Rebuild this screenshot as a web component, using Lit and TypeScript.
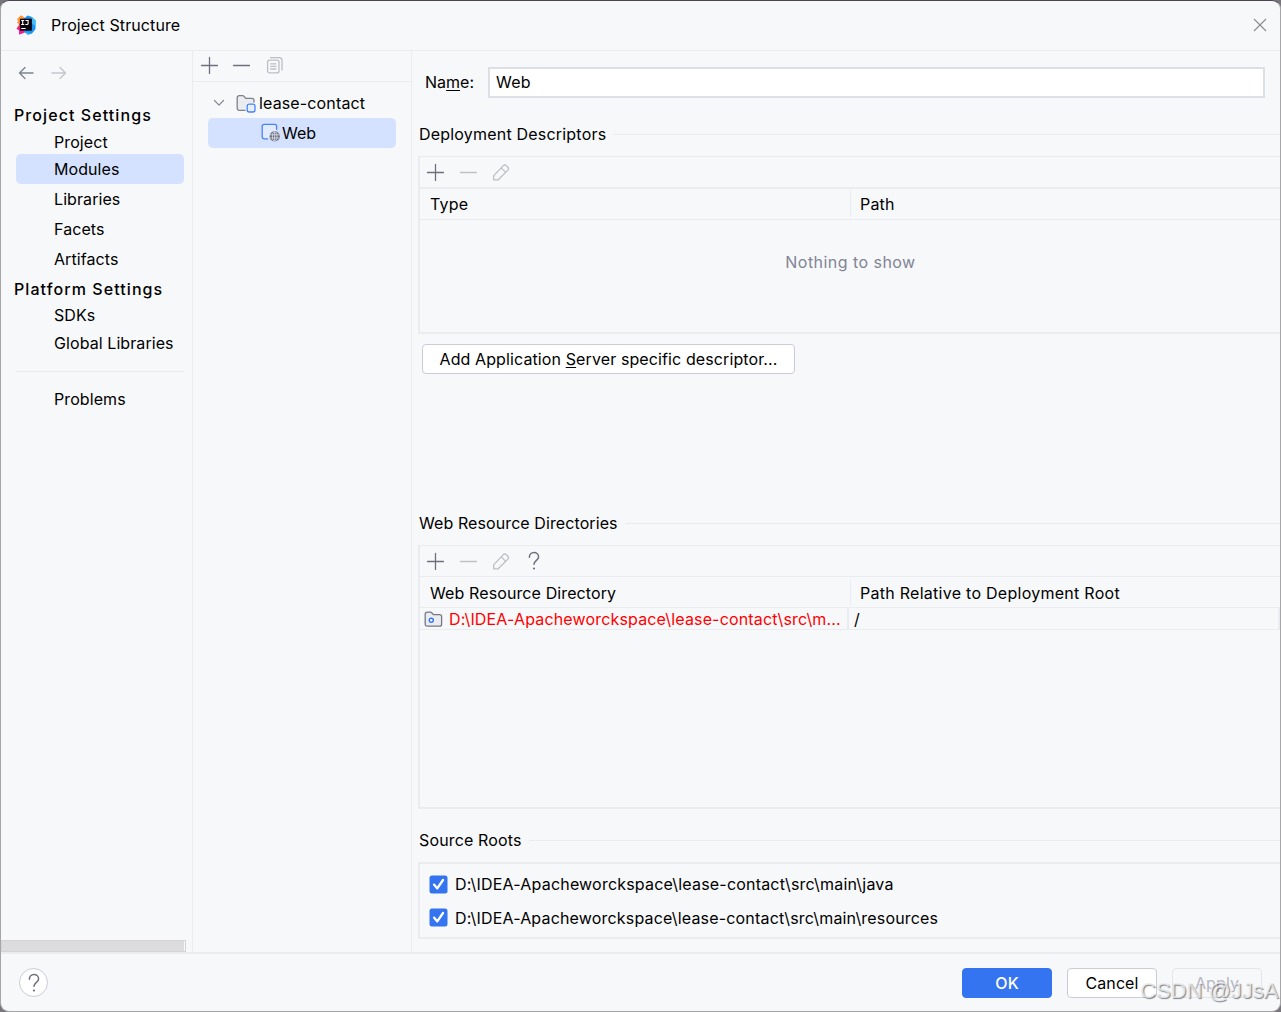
import { LitElement, html, css, svg, nothing } from "lit";
import { customElement, property } from "lit/decorators.js";
import { classMap } from "lit/directives/class-map.js";

const ICONS: Record<string, { w: number; h: number; body: unknown }> = {
  plus: { w: 18, h: 18, body: svg`<path d="M9.500 1.500v16M1.500 9.500h16" stroke="#6c707e" stroke-width="1.300" fill="none" stroke-linecap="round"/>` },
  minus: { w: 18, h: 18, body: svg`<path d="M1.500 9.500h16" stroke="#6c707e" stroke-width="1.300" fill="none" stroke-linecap="round"/>` },
  minusOff: { w: 18, h: 18, body: svg`<path d="M1.500 9.500h16" stroke="#bfc1c7" stroke-width="1.300" fill="none" stroke-linecap="round"/>` },
  copy: {
    w: 18, h: 18,
    body: svg`<g stroke="#bcbec4" stroke-width="1.300" fill="none" stroke-linecap="round"><rect x="1.600" y="4.100" width="11.400" height="12.800" rx="2"/><path d="M4.500 1.600h8.700a2.800 2.800 0 0 1 2.800 2.800v9.600M4.700 7.800h5.200M4.700 10.400h5.200M4.700 13h5.200"/></g>`,
  },
  pencil: {
    w: 18, h: 18,
    body: svg`<g stroke="#bcbec4" stroke-width="1.300" fill="none" stroke-linejoin="round"><path d="M1.700 12.600 11.400 2.600a2 2 0 0 1 2.900 0l1.600 1.600a2 2 0 0 1 0 2.900L6.200 16.800H1.700z"/><path d="m9.200 4.900 4.500 4.500"/></g>`,
  },
  question: {
    w: 14, h: 20,
    body: svg`<path d="M2.400 6.200C2.400 3.500 4.400 1.600 7 1.600s4.600 1.800 4.600 4.300c0 3.300-4.600 3.700-4.600 7.400" stroke="#6c707e" stroke-width="1.500" fill="none" stroke-linecap="round"/><circle cx="7" cy="17.500" r="1.100" fill="#6c707e"/>`,
  },
  back: { w: 16, h: 14, body: svg`<path d="M15 7H1.500M7 1.500 1.500 7 7 12.500" stroke="#7e8290" stroke-width="1.300" fill="none" stroke-linecap="round" stroke-linejoin="round"/>` },
  forward: { w: 16, h: 14, body: svg`<path d="M1 7h13.500M9 1.500 14.500 7 9 12.500" stroke="#c4c6cc" stroke-width="1.300" fill="none" stroke-linecap="round" stroke-linejoin="round"/>` },
  close: { w: 14, h: 14, body: svg`<path d="m1 1 12 12M13 1 1 13" stroke="#8a8b8f" stroke-width="1.100" fill="none"/>` },
  chevron: { w: 12, h: 8, body: svg`<path d="M1.500 1.500 6 6.200l4.500-4.700" stroke="#868a96" stroke-width="1.200" fill="none" stroke-linecap="round" stroke-linejoin="round"/>` },
  folder: {
    w: 20, h: 19,
    body: svg`<path d="M10 16.300H3.200a2 2 0 0 1-2-2V3.600a2 2 0 0 1 2-2h3.300c.5 0 1 .2 1.300.6l2 2.200h6.400a2 2 0 0 1 2 2v3" fill="#ebecf0" stroke="none"/><path d="M9.500 16.300H3.200a2 2 0 0 1-2-2V3.600a2 2 0 0 1 2-2h3.300c.5 0 1 .2 1.300.6l2 2.200h6.200a2 2 0 0 1 2 2v2.200" fill="none" stroke="#7d818e" stroke-width="1.300"/><rect x="10.200" y="9.200" width="9.800" height="9.800" fill="#f7f8fa"/><rect x="11.200" y="10.200" width="7.800" height="7.800" rx="2" fill="#e7effd" stroke="#4682fa" stroke-width="1.300"/>`,
  },
  web: {
    w: 19, h: 19,
    body: svg`<path d="M7 15.800H3.200a2 2 0 0 1-2-2V3.400a2 2 0 0 1 2-2h10.400a2 2 0 0 1 2 2v4.100L7 15.800z" fill="#e2ebfd"/><path d="M7 15.800H3.200a2 2 0 0 1-2-2V3.400a2 2 0 0 1 2-2h10.400a2 2 0 0 1 2 2v3.300" fill="none" stroke="#4682fa" stroke-width="1.300"/><circle cx="13.700" cy="13.400" r="5.100" fill="#6c707e"/><g stroke="#dfe5f3" stroke-width=".8" fill="none"><path d="M9.200 11.800h9M9.200 15h9M13.700 8.900v9"/><ellipse cx="13.700" cy="13.400" rx="2.300" ry="4.600"/></g>`,
  },
  resource: {
    w: 19, h: 17,
    body: svg`<path d="M1.200 3.200a2 2 0 0 1 2-2h3.200c.5 0 1 .2 1.300.6l1.700 1.800h6.200a2 2 0 0 1 2 2v7.600a2 2 0 0 1-2 2H3.200a2 2 0 0 1-2-2z" fill="#ebecf0" stroke="#747884" stroke-width="1.300"/><circle cx="7.300" cy="9.300" r="2" fill="#fff" stroke="#3574f0" stroke-width="1.400"/>`,
  },
  check: {
    w: 19, h: 19,
    body: svg`<rect x=".5" y=".5" width="18" height="18" rx="2.500" fill="#3574f0"/><path d="m5 9.600 3.300 3.800L14 5" stroke="#fff" stroke-width="2.300" fill="none" stroke-linecap="round" stroke-linejoin="round"/>`,
  },
  logo: {
    w: 20, h: 20,
    body: svg`<path d="M1.500 4 5 .5l4 2.500L7 18l-4 1.500.3-4L.5 13.500 3 10z" fill="#fe315d"/><path d="M1.500 3.500 5 .5 8.500 3 4 8.500.8 7.800l1.400-2z" fill="#fc9f2b"/><path d="m.5 13.500 4-1L10 17l-2.500 1-4.500 1.500.3-4z" fill="#f61a9b"/><path d="m8.500 3.200 3-2.700L16 2l3.500 3.500L19.500 14 16 18.500l-4 1.200L8.500 17z" fill="#1694f4"/><path d="m15.500 1.800 4 3.700V11L15 8z" fill="#43bdf5"/><path d="m8.500 16.500 3.500 3.200 2.500-1.700z" fill="#31b2f5"/><rect x="3.900" y="3.700" width="12" height="12" fill="#0b0510"/><g stroke="#fff" stroke-width="1.100" fill="none"><path d="M5.200 5.500h3M6.700 5.500v4M5.200 9.500h3M9.600 5.500h2.500v3q0 1-1.300 1H9.400M5.200 13.500h4.500"/></g>`,
  },
};

@customElement("ui-icon")
export class UiIcon extends LitElement {
  @property() name = "plus";
  static styles = css`
    :host { display: block; flex: none; }
    svg { display: block; }
  `;
  render() {
    const i = ICONS[this.name];
    return html`<svg width=${i.w} height=${i.h} viewBox="0 0 ${i.w} ${i.h}">${i.body}</svg>`;
  }
}

@customElement("section-title")
export class SectionTitle extends LitElement {
  @property() label = "";
  static styles = css`
    :host { display: flex; align-items: center; gap: 7px; height: 20px; white-space: nowrap; }
    .rule { flex: 1; height: 1px; background: #ebecf0; }
  `;
  render() {
    return html`<span>${this.label}</span><span class="rule"></span>`;
  }
}

const NAV = [
  { label: "Project Settings", kind: "heading", size: "h28" },
  { label: "Project", kind: "item", size: "h25" },
  { label: "Modules", kind: "item", size: "h30", selected: true },
  { label: "Libraries", kind: "item", size: "h30" },
  { label: "Facets", kind: "item", size: "h30" },
  { label: "Artifacts", kind: "item", size: "h30" },
  { label: "Platform Settings", kind: "heading", size: "h30" },
  { label: "SDKs", kind: "item", size: "h22" },
  { label: "Global Libraries", kind: "item", size: "h33" },
  { label: "", kind: "separator", size: "" },
  { label: "Problems", kind: "item", size: "h30" },
];

const ROOTS = [
  "D:\\IDEA-Apacheworckspace\\lease-contact\\src\\main\\java",
  "D:\\IDEA-Apacheworckspace\\lease-contact\\src\\main\\resources",
];

@customElement("app-root")
export class AppRoot extends LitElement {
  static styles = css`
    :host { display: block; width: 1281px; height: 1012px; background: #77747a; overflow: hidden;
      font: 16px/20px Inter, "Liberation Sans", sans-serif; letter-spacing: 0.2px; color: #000; position: relative; }
    * { box-sizing: border-box; }
    .window { display: flex; flex-direction: column; width: 1281px; height: 1012px; border: 1px solid #a6a6a8;
      border-top-color: #4c444c; border-radius: 9px; background: #f7f8fa; overflow: hidden; }
    .titlebar { height: 50px; display: flex; align-items: center; padding: 0 13px 1px 15px; border-bottom: 1px solid #ebecf0; }
    .title { flex: 1; margin-left: 15px; letter-spacing: 0.1px; }
    .body { display: flex; height: 901px; }
    .sidebar { width: 192px; border-right: 1px solid #ebecf0; display: flex; flex-direction: column; }
    .history { display: flex; align-items: center; gap: 17px; padding: 0 17px; height: 44px; }
    .nav { padding: 6px 8.500px 0 15px; flex: 1; letter-spacing: 0.08px; }
    .row { display: flex; align-items: center; border-radius: 5px; padding-left: 38px; white-space: nowrap; }
    .row.heading { padding-left: 0; margin-left: -2px; font-weight: 500; letter-spacing: 1.080px; }
    .row.selected { background: #d4e2ff; }
    .h22 { height: 22px; } .h25 { height: 25px; } .h28 { height: 28px; } .h30 { height: 30px; } .h33 { height: 33px; }
    .separator { height: 1px; background: #ebecf0; margin: 12px 0 12px; }
    .scroll { width: 185px; height: 12px; background: #dcdcde; border: 1px solid #d4d4d6; box-shadow: inset -1px 0 #f7f8fa; }
    .tree { width: 219px; border-right: 1px solid #ebecf0; }
    .treebar { height: 31px; display: flex; align-items: center; padding: 0 7px 3px; gap: 14px; border-bottom: 1px solid #ebecf0; }
    .treebar ui-icon:last-child { margin-left: 2px; }
    .node { display: flex; align-items: center; height: 30px; margin-left: 15px; width: 188px; border-radius: 5px; white-space: nowrap; }
    .node.root { margin-top: 6px; padding-left: 5px; letter-spacing: 0.140px; }
    .node.root .name { margin-left: 3px; }
    .node.root ui-icon + ui-icon { margin-left: 11px; }
    .node.child { background: #d4e2ff; background-clip: padding-box; margin-top: -0.5px; padding-left: 53px; letter-spacing: 0; }
    .node.child .name { margin-left: 2px; }
    .main { flex: 1; min-width: 0; padding-left: 6px; display: flex; flex-direction: column; }
    .field { display: flex; align-items: center; margin: 16px 15px 0 7px; height: 31px; }
    .field label { width: 63px; flex: none; margin-top: -1px; letter-spacing: 0; }
    .input { flex: 1; height: 31px; border: 2px solid #dddfe7; background: #fff; padding: 3px 6px; line-height: 21px; }
    u { text-decoration-thickness: 1px; text-underline-offset: 2px; }
    .dd { margin: 26px 0 12px 1px; }
    .box { border: solid #ebecf0; border-width: 1px 0 2px 2px; }
    .t1 { height: 178px; }
    .t2 { height: 264px; }
    .tools { display: flex; align-items: center; gap: 15px; padding-left: 6px; height: 32px; border-bottom: 2px solid #ebecf0; }
    .t2 .tools { height: 31px; border-bottom-width: 1px; padding-bottom: 1px; }
    .tools ui-icon:nth-child(4) { margin-left: 2px; }
    .thead { display: flex; height: 31px; border-bottom: 1px solid #ebecf0; }
    .cell { display: flex; align-items: center; padding-left: 10px; white-space: nowrap; }
    .cell.first { width: 431px; border-right: 1px solid #ebecf0; height: 27px; margin-top: 1px; padding-bottom: 0; }
    .cell.second { padding-left: 9px; }
    .t2 .cell.first { letter-spacing: 0.110px; margin-top: 2px; }
    .t2 .cell.second { letter-spacing: 0.270px; padding-top: 2px; }
    .empty { color: #818594; text-align: center; width: 861px; padding-top: 32px; letter-spacing: 0.460px; }
    .add { margin: 10px 0 0 4px; width: 373px; height: 30px; letter-spacing: 0.110px; }
    .btn { display: flex; align-items: center; justify-content: center; background: #fff; border: 1px solid #c9ccd6; border-radius: 4px;
      font: inherit; color: #000; padding: 0; white-space: nowrap; }
    .wrd { margin: 139px 0 12px 1px; letter-spacing: 0.090px; }
    .trow { display: flex; height: 22px; border-bottom: 1px solid #ebecf0; padding-left: 5px; align-items: center; }
    .trow ui-icon { margin: 1px 0 0 -1px; }
    .path { color: #f00; margin-left: 6px; width: 398px; height: 20px; overflow: hidden; white-space: nowrap; letter-spacing: 0.160px; }
    .rel { align-self: stretch; flex: 1; border-left: 2px solid #ebecf0; border-right: 2px solid #ebecf0; padding-left: 5px; line-height: 22px; }
    .sr { margin: 21px 0 12px 1px; letter-spacing: 0.140px; }
    .roots { height: 77px; border-top-width: 2px; padding: 3px 0 0 9px; }
    .check { display: flex; align-items: center; height: 34px; gap: 7px; white-space: nowrap; }
    .check + .check { letter-spacing: 0.180px; }
    .check + .check ui-icon { margin-top: -1px; }
    .footer { flex: 1; border-top: 2px solid #ebecf0; display: flex; align-items: center; padding: 0 18px; gap: 15px; }
    .help { width: 29px; height: 29px; border-radius: 50%; border: 1px solid #c9ccd6; background: #fff; display: grid; place-items: center; margin-right: auto; }
    .foot { width: 90px; height: 30px; letter-spacing: 0.100px; }
    .ok { background: #3574f0; border-color: #3574f0; color: #fff; font-weight: 500; }
    .apply { background: transparent; border-color: #e4e5ea; color: #b4b7c2; }
    .mark { position: absolute; left: 1140px; top: 977px; font: 22px/28px "Liberation Sans", sans-serif; letter-spacing: 0; white-space: nowrap;
      color: rgba(240, 240, 242, 0.8); text-shadow: 1px 1px 1px rgba(90, 90, 95, 0.75); }
  `;

  private tools(help: boolean) {
    return html`<div class="tools">
      <ui-icon name="plus"></ui-icon><ui-icon name="minusOff"></ui-icon><ui-icon name="pencil"></ui-icon>
      ${help ? html`<ui-icon name="question"></ui-icon>` : nothing}
    </div>`;
  }

  private head(a: string, b: string) {
    return html`<div class="thead"><div class="cell first">${a}</div><div class="cell second">${b}</div></div>`;
  }

  render() {
    return html`
      <div class="window">
        <div class="titlebar"><ui-icon name="logo"></ui-icon><span class="title">Project Structure</span><ui-icon name="close"></ui-icon></div>
        <div class="body">
          <div class="sidebar">
            <div class="history"><ui-icon name="back"></ui-icon><ui-icon name="forward"></ui-icon></div>
            <div class="nav">
              ${NAV.map((n) =>
                n.kind === "separator"
                  ? html`<div class="separator"></div>`
                  : html`<div class=${classMap({ row: true, heading: n.kind === "heading", selected: !!n.selected, [n.size]: true })}>${n.label}</div>`
              )}
            </div>
            <div class="scroll"></div>
          </div>
          <div class="tree">
            <div class="treebar"><ui-icon name="plus"></ui-icon><ui-icon name="minus"></ui-icon><ui-icon name="copy"></ui-icon></div>
            <div class="node root"><ui-icon name="chevron"></ui-icon><ui-icon name="folder"></ui-icon><span class="name">lease-contact</span></div>
            <div class="node child"><ui-icon name="web"></ui-icon><span class="name">Web</span></div>
          </div>
          <div class="main">
            <div class="field"><label>Na<u>m</u>e:</label><div class="input">Web</div></div>
            <section-title class="dd" label="Deployment Descriptors"></section-title>
            <div class="box t1">
              ${this.tools(false)} ${this.head("Type", "Path")}
              <div class="empty">Nothing to show</div>
            </div>
            <button class="btn add"><span>Add Application <u>S</u>erver specific descriptor...</span></button>
            <section-title class="wrd" label="Web Resource Directories"></section-title>
            <div class="box t2">
              ${this.tools(true)} ${this.head("Web Resource Directory", "Path Relative to Deployment Root")}
              <div class="trow">
                <ui-icon name="resource"></ui-icon>
                <span class="path">D:\\IDEA-Apacheworckspace\\lease-contact\\src\\m...</span>
                <span class="rel">/</span>
              </div>
            </div>
            <section-title class="sr" label="Source Roots"></section-title>
            <div class="box roots">${ROOTS.map((r) => html`<div class="check"><ui-icon name="check"></ui-icon><span>${r}</span></div>`)}</div>
          </div>
        </div>
        <div class="footer">
          <div class="help"><ui-icon name="question"></ui-icon></div>
          <button class="btn foot ok">OK</button>
          <button class="btn foot">Cancel</button>
          <button class="btn foot apply">Apply</button>
        </div>
      </div>
      <div class="mark">CSDN @JJsA</div>
    `;
  }
}
